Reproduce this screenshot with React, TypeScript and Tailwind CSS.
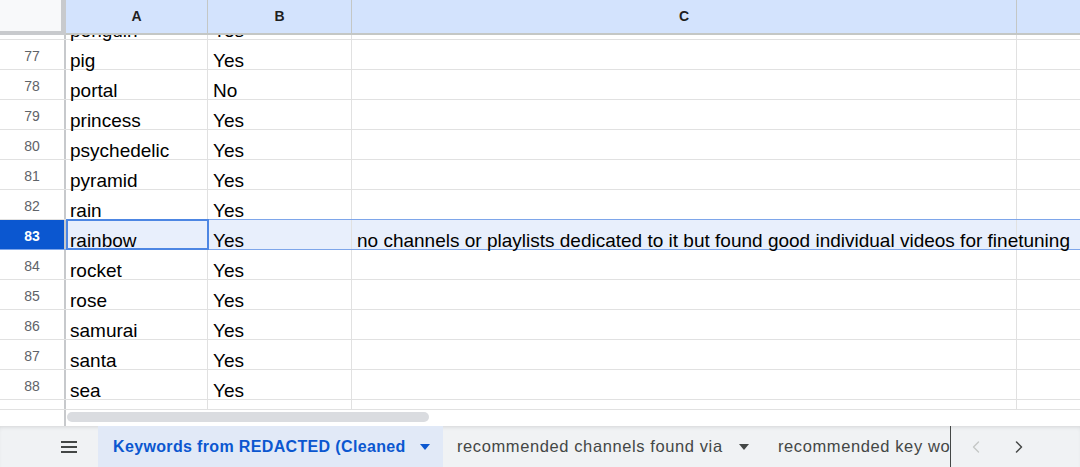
import { ChevronLeft, ChevronRight } from "lucide-react";

type Row = { n: number; a: string; b: string; c?: string };

const rows: Row[] = [
  { n: 76, a: "penguin", b: "Yes" },
  { n: 77, a: "pig", b: "Yes" },
  { n: 78, a: "portal", b: "No" },
  { n: 79, a: "princess", b: "Yes" },
  { n: 80, a: "psychedelic", b: "Yes" },
  { n: 81, a: "pyramid", b: "Yes" },
  { n: 82, a: "rain", b: "Yes" },
  {
    n: 83,
    a: "rainbow",
    b: "Yes",
    c: "no channels or playlists dedicated to it but found good individual videos for finetuning",
  },
  { n: 84, a: "rocket", b: "Yes" },
  { n: 85, a: "rose", b: "Yes" },
  { n: 86, a: "samurai", b: "Yes" },
  { n: 87, a: "santa", b: "Yes" },
  { n: 88, a: "sea", b: "Yes" },
  { n: 89, a: "", b: "" },
];

const Caret = ({ className }: { className: string }) => (
  <svg width="10" height="6" viewBox="0 0 10 6" className={className}>
    <path d="M0 0h10L5 6z" fill="currentColor" />
  </svg>
);

const cell =
  "flex shrink-0 items-end overflow-visible whitespace-nowrap border-r border-[#e1e1e1] pb-[1px] text-[19px] leading-[14px] text-black";

function GridRow({ row }: { row: Row }) {
  const active = row.n === 83;
  return (
    <div
      className={`relative flex h-[30px] shrink-0 border-b ${active ? "border-[#7ea6ea] bg-[#e8effc]" : "border-[#e1e1e1]"}`}
    >
      <div
        className={`flex w-[66px] shrink-0 items-center justify-center border-r-2 border-[#c7c9cc] pt-[3px] text-[14px] ${active ? "bg-[#0b57d0] font-bold text-white" : "text-[#5f6368]"}`}
      >
        {row.n}
      </div>
      <div className={`${cell} w-[142px] pl-[4px]`}>{row.a}</div>
      <div className={`${cell} w-[144px] pl-[5px]`}>{row.b}</div>
      <div className={`${cell} w-[665px] pl-[5px]`}>{row.c}</div>
      <div className="flex-1" />
      {active && (
        <>
          <div className="absolute left-[66px] right-0 top-[-1px] h-px bg-[#7ea6ea]" />
          <div className="absolute bottom-[-1px] left-[66px] top-[-1px] w-[143px] border-2 border-[#4d86e3]" />
        </>
      )}
    </div>
  );
}

export default function App() {
  return (
    <div className="flex h-[467px] w-[1080px] flex-col overflow-hidden bg-white font-['Liberation_Sans',Arial,sans-serif]">
      {/* column header */}
      <div className="flex h-[35px] shrink-0">
        <div className="w-[66px] shrink-0 border-b-[4px] border-r-[5px] border-[#c8cacd] bg-[#f8f9fa]" />
        <div className="flex flex-1 border-b-2 border-[#c4c7c5] bg-[#d3e3fd] text-[14px] font-bold text-[#1f1f1f]">
          <div className="flex w-[142px] items-center justify-center border-r border-[#c4c7c5]">A</div>
          <div className="flex w-[144px] items-center justify-center border-r border-[#c4c7c5]">B</div>
          <div className="flex w-[665px] items-center justify-center border-r border-[#c4c7c5]">C</div>
          <div className="flex-1" />
        </div>
      </div>

      {/* body */}
      <div className="flex h-[374px] shrink-0 flex-col overflow-hidden">
        <div className="-mt-[25px] flex flex-col">
          {rows.map((r) => (
            <GridRow key={r.n} row={r} />
          ))}
        </div>
      </div>

      {/* horizontal scrollbar */}
      <div className="flex h-[17px] shrink-0 border-t border-[#e1e1e1]">
        <div className="w-[66px] shrink-0 border-r-2 border-[#c7c9cc]" />
        <div className="flex flex-1 items-center pb-[2px] pl-[1px]">
          <div className="h-[10px] w-[362px] rounded-full bg-[#dadce0]" />
        </div>
      </div>

      {/* sheet tabs */}
      <div className="flex h-[41px] shrink-0 items-stretch bg-[#f0f2f4] shadow-[inset_0_3px_4px_-2px_rgba(0,0,0,0.12)]">
        <div className="flex w-[98px] shrink-0 items-center pl-[60px]">
          <svg width="18" height="14" viewBox="0 0 18 14">
            <path d="M1 2h16M1 7h16M1 12h16" stroke="#444746" strokeWidth="2" />
          </svg>
        </div>
        <div className="flex w-[345px] shrink-0 items-center gap-[14px] bg-[#e1e9f7] pl-[15px] text-[16px] font-bold tracking-[0.35px] text-[#0b57d0]">
          <span className="whitespace-nowrap">Keywords from REDACTED (Cleaned</span>
          <Caret className="text-[#0b57d0]" />
        </div>
        <div className="flex w-[321px] shrink-0 items-center gap-[16px] pl-[14px] text-[16.5px] tracking-[0.6px] text-[#444746]">
          <span className="whitespace-nowrap">recommended channels found via</span>
          <Caret className="text-[#444746]" />
        </div>
        <div className="flex w-[187px] shrink-0 items-center overflow-hidden border-r border-[#444746] pl-[14px] text-[16.5px] tracking-[0.6px] text-[#444746]">
          <span className="whitespace-nowrap">recommended key words</span>
        </div>
        <div className="flex items-center gap-[23px] pl-[15px]">
          <ChevronLeft size={20} strokeWidth={1.6} className="text-[#c4c7c5]" />
          <ChevronRight size={20} strokeWidth={1.8} className="text-[#444746]" />
        </div>
      </div>
    </div>
  );
}
